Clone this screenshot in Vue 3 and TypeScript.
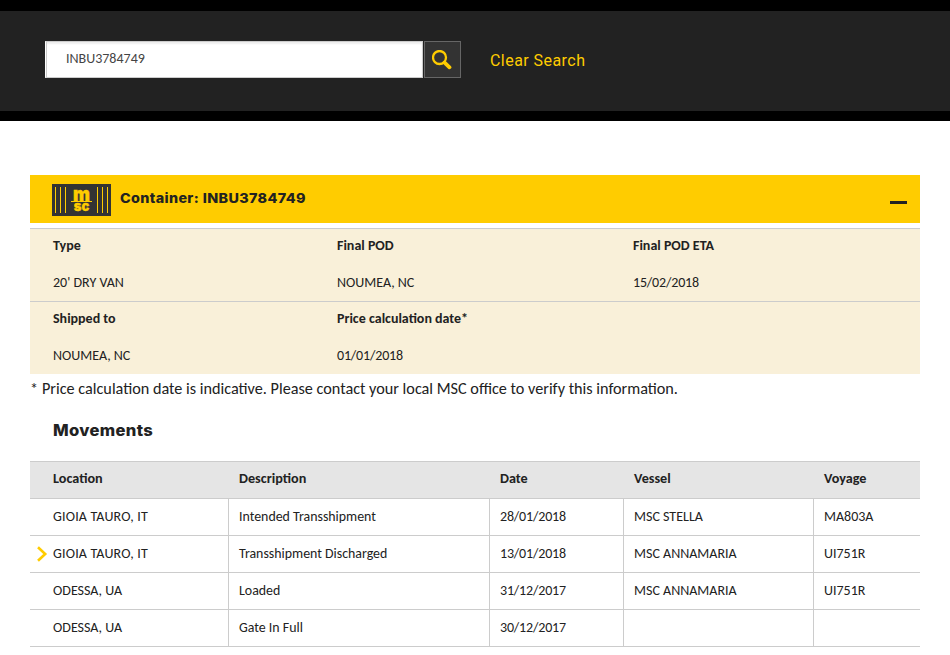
<script setup lang="ts">
import { ref } from 'vue'

interface Detail { label: string; value: string; date?: boolean }
interface Movement {
  location: string
  description: string
  date: string
  vessel: string
  voyage: string
  current?: boolean
}

const query = ref('INBU3784749')
const details: Detail[][] = [
  [
    { label: 'Type', value: "20' DRY VAN" },
    { label: 'Final POD', value: 'NOUMEA, NC' },
    { label: 'Final POD ETA', value: '15/02/2018', date: true },
  ],
  [
    { label: 'Shipped to', value: 'NOUMEA, NC' },
    { label: 'Price calculation date*', value: '01/01/2018', date: true },
  ],
]
const movements: Movement[] = [
  { location: 'GIOIA TAURO, IT', description: 'Intended Transshipment', date: '28/01/2018', vessel: 'MSC STELLA', voyage: 'MA803A' },
  { location: 'GIOIA TAURO, IT', description: 'Transshipment Discharged', date: '13/01/2018', vessel: 'MSC ANNAMARIA', voyage: 'UI751R', current: true },
  { location: 'ODESSA, UA', description: 'Loaded', date: '31/12/2017', vessel: 'MSC ANNAMARIA', voyage: 'UI751R' },
  { location: 'ODESSA, UA', description: 'Gate In Full', date: '30/12/2017', vessel: '', voyage: '' },
]
</script>

<template>
  <div class="page">
    <header class="search-bar">
      <input v-model="query" class="search-input" type="text" aria-label="Container number" />
      <button class="search-button" aria-label="Search">
        <svg width="20" height="20" viewBox="0 0 20 20">
          <circle cx="7.5" cy="7.5" r="6.5" fill="none" stroke="#fc0" stroke-width="2.3" />
          <path d="M12.6 12.6L17.5 17.3" stroke="#fc0" stroke-width="3.8" stroke-linecap="round" />
        </svg>
      </button>
      <a class="clear">Clear Search</a>
    </header>

    <main class="content">
      <div class="container-head">
        <svg class="logo" width="59" height="32" viewBox="0 0 59 32">
          <rect width="59" height="32" fill="#333" />
          <path d="M3.5 3v26M8.5 3v26M13.5 3v26M45.5 3v26M50.5 3v26M55.5 3v26" stroke="#fc0" stroke-width="1" />
          <text class="logo-m" x="29.5" y="17.2" text-anchor="middle" textLength="17" lengthAdjust="spacingAndGlyphs">m</text>
          <path d="M19 17.5h21" stroke="#fc0" stroke-width="1" />
          <text class="logo-sc" x="29.5" y="26.8" text-anchor="middle" textLength="15.5" lengthAdjust="spacingAndGlyphs">sc</text>
        </svg>
        <h1 class="container-title">Container: INBU3784749</h1>
        <span class="collapse"></span>
      </div>

      <section class="details">
        <div v-for="(row, i) in details" :key="i" class="detail-row">
          <div v-for="item in row" :key="item.label" class="detail">
            <div class="detail-label">{{ item.label }}</div>
            <div class="detail-value" :class="{ date: item.date }">{{ item.value }}</div>
          </div>
        </div>
      </section>
      <p class="note"><span class="star">*</span>Price calculation date is indicative. Please contact your local MSC office to verify this information.</p>

      <h2 class="movements-title">Movements</h2>
      <table class="movements">
        <colgroup>
          <col class="c-location" /><col class="c-description" /><col class="c-date" /><col class="c-vessel" /><col class="c-voyage" />
        </colgroup>
        <thead>
          <tr><th>Location</th><th>Description</th><th>Date</th><th>Vessel</th><th>Voyage</th></tr>
        </thead>
        <tbody>
          <tr v-for="(m, i) in movements" :key="i">
            <td :class="{ port: m.location.startsWith('GIOIA') }">
              <svg v-if="m.current" class="marker" width="11" height="16" viewBox="0 0 11 16">
                <path d="M1 1.2L8.2 8L1 14.8" fill="none" stroke="#fc0" stroke-width="2.6" />
              </svg>{{ m.location }}
            </td>
            <td class="description">{{ m.description }}</td>
            <td class="date">{{ m.date }}</td>
            <td>{{ m.vessel }}</td>
            <td>{{ m.voyage }}</td>
          </tr>
        </tbody>
      </table>
    </main>
  </div>
</template>

<style>
body { margin: 0; background: #fff; overflow: hidden; }
</style>

<style scoped>
.page { width: 950px; font-family: Carlito, Lato, sans-serif; font-size: 14px; color: #222; }
.search-bar {
  box-sizing: border-box; height: 121px; padding-left: 45px;
  display: flex; align-items: flex-start; padding-top: 30px;
  background: #222; border-top: 11px solid #000; border-bottom: 10px solid #000;
}
.search-input {
  box-sizing: border-box; width: 378px; height: 37px; margin: 0; padding: 0 20px 2px;
  border: 1px solid #ccc; border-left-color: #fff; border-radius: 0; background: #fff;
  box-shadow: inset 1px 0 0 #ccc, inset 0 2px 2px #eee;
  font: inherit; color: #444; outline: none;
}
.search-button {
  box-sizing: border-box; width: 37px; height: 37px; margin-left: 1px; padding: 0;
  display: flex; align-items: center; justify-content: center;
  border: 1px solid #666; background: #333;
}
.search-button svg { margin: 0 1px 0 0; }
.clear { margin-left: 29px; font: 16px/39px Roboto, sans-serif; letter-spacing: .45px; color: #fc0; white-space: nowrap; }
.content { padding: 54px 30px 0; }
.container-head { height: 48px; display: flex; align-items: flex-start; background: #fc0; }
.logo { margin: 9px 0 0 22px; flex: none; overflow: visible; }
.logo-m { font: 900 19px Inter, sans-serif; fill: #fc0; stroke: #fc0; stroke-width: .4; }
.logo-sc { font: 900 13px Inter, sans-serif; fill: #fc0; stroke: #fc0; stroke-width: .3; }
.container-title { margin: 0 0 0 9px; font: 800 13.4px/46px Inter, sans-serif; letter-spacing: .35px; color: #222; white-space: nowrap; transform: scaleX(1.07); transform-origin: 0 50%; }
.collapse { width: 17px; height: 3px; margin: 26px 13px 0 auto; background: #222; }
.details { margin-top: 5px; background: #f9f0d9; }
.detail-row {
  box-sizing: border-box; height: 73px; padding-left: 23px; border-top: 1px solid #ccc;
  display: grid; grid-template-columns: 284px 296px 1fr;
}
.detail-label { height: 35px; line-height: 33px; font-weight: 700; }
.detail-value { height: 37px; line-height: 37px; }
.date { letter-spacing: -.16px; }
.port { letter-spacing: .17px; }
.description { font-size: 13.9px; }
.note { margin: 0; height: 30px; line-height: 30px; font-size: 16.22px; white-space: nowrap; }
.star { display: inline-block; width: 12px; }
.movements-title { margin: 11px 0 0 23px; font: 800 15.5px/31px Inter, sans-serif; letter-spacing: .3px; color: #222; transform: scaleX(1.07); transform-origin: 0 50%; }
.movements { margin-top: 15px; width: 890px; border-collapse: separate; border-spacing: 0; table-layout: fixed; }
.c-location { width: 199px; }
.c-description { width: 261px; }
.c-date { width: 134px; }
.c-vessel { width: 190px; }
.c-voyage { width: 106px; }
th { box-sizing: border-box; height: 38px; padding: 0 0 4px 10px; line-height: 17px; text-align: left; background: #e5e5e5; border-top: 1px solid #ccc; border-bottom: 1px solid #ccc; font-size: 14.2px; }
td { box-sizing: border-box; position: relative; height: 37px; padding: 0 0 2px 10px; border-bottom: 1px solid #ccc; border-right: 1px solid #ccc; white-space: nowrap; }
td:last-child { border-right: 0; }
th:first-child, td:first-child { padding-left: 23px; }
.marker { position: absolute; left: 7px; top: 10px; }
</style>
